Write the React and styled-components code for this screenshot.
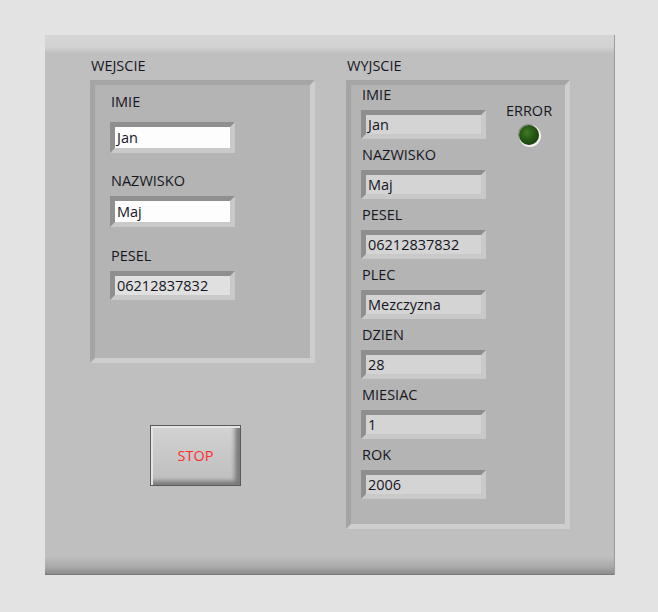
import React from 'react';
import styled, { createGlobalStyle } from 'styled-components';

const GlobalStyle = createGlobalStyle`
  body {
    margin: 0;
    background: #e3e3e3;
    font-family: "Open Sans", "Noto Sans", sans-serif;
  }
`;

const inputs = [
  { label: 'IMIE', value: 'Jan', kind: 'control', gapTop: 9, gapLabel: 12 },
  { label: 'NAZWISKO', value: 'Maj', kind: 'control', gapTop: 20, gapLabel: 7 },
  { label: 'PESEL', value: '06212837832', kind: 'grey', gapTop: 21, gapLabel: 7 },
];

const outputs = [
  { label: 'IMIE', value: 'Jan' },
  { label: 'NAZWISKO', value: 'Maj' },
  { label: 'PESEL', value: '06212837832' },
  { label: 'PLEC', value: 'Mezczyzna' },
  { label: 'DZIEN', value: '28' },
  { label: 'MIESIAC', value: '1' },
  { label: 'ROK', value: '2006' },
];

function App() {
  return (
    <>
      <GlobalStyle />
      <Panel>
        <TopBar />
        <Content>
          <Column $width={225}>
            <Caption>WEJSCIE</Caption>
            <Cluster $height={283}>
              <LeftFields>
                {inputs.map((f) => (
                  <FieldGroup key={f.label} style={{ marginTop: f.gapTop }}>
                    <Label>{f.label}</Label>
                    <Box $kind={f.kind} style={{ marginTop: f.gapLabel }}>
                      {f.value}
                    </Box>
                  </FieldGroup>
                ))}
              </LeftFields>
            </Cluster>
            <StopButton>STOP</StopButton>
          </Column>
          <Column $width={224}>
            <Caption>WYJSCIE</Caption>
            <Cluster $height={449}>
              <RightInner>
                <RightFields>
                  {outputs.map((f) => (
                    <OutGroup key={f.label}>
                      <Label>{f.label}</Label>
                      <Box $kind="indicator">{f.value}</Box>
                    </OutGroup>
                  ))}
                </RightFields>
                <ErrorIndicator>
                  <Label>ERROR</Label>
                  <Led />
                </ErrorIndicator>
              </RightInner>
            </Cluster>
          </Column>
        </Content>
        <BottomBar />
      </Panel>
    </>
  );
}

export default App;

const Panel = styled.div`
  margin: 35px 0 0 45px;
  width: 570px;
  height: 540px;
  display: flex;
  flex-direction: column;
  background: #bfbfbf;
  border-right: 1px solid #9c9c9c;
  box-sizing: border-box;
`;

const TopBar = styled.div`
  height: 18px;
  background: linear-gradient(#d5d5d5, #d3d3d3 65%, #c0c0c0);
`;

const BottomBar = styled.div`
  height: 18px;
  background: linear-gradient(#bdbdbd, #a9a9a9 55%, #8e8e8e 92%, #6f6f6f);
`;

const Content = styled.div`
  flex: 1;
  display: flex;
  gap: 31px;
  padding: 5px 0 0 45px;
`;

const Column = styled.div`
  width: ${(p) => p.$width}px;
  display: flex;
  flex-direction: column;
`;

const Caption = styled.div`
  height: 16px;
  line-height: 16px;
  font-size: 14.5px;
  color: #17171f;
  margin-left: 1px;
  margin-bottom: 6px;
`;

const Cluster = styled.div`
  height: ${(p) => p.$height}px;
  box-sizing: border-box;
  background: #b4b4b4;
  border-style: solid;
  border-width: 5px;
  border-color: #a5a5a5 #cecece #cecece #a5a5a5;
`;

const LeftFields = styled.div`
  padding-left: 15px;
  display: flex;
  flex-direction: column;
`;

const FieldGroup = styled.div`
  display: flex;
  flex-direction: column;
`;

const Label = styled.div`
  height: 16px;
  line-height: 16px;
  font-size: 14.5px;
  color: #17171f;
  margin-left: 1px;
  white-space: nowrap;
`;

const fills = {
  control: '#fdfdfd',
  grey: '#e0e0e0',
  indicator: '#d4d4d4',
};

const Box = styled.div`
  width: 125px;
  height: ${(p) => (p.$kind === 'control' ? 31 : 29)}px;
  box-sizing: border-box;
  border-style: solid;
  border-width: 5px;
  border-color: #8f8f8f #c9c9c9 #c9c9c9 #8f8f8f;
  background: ${(p) => fills[p.$kind]};
  padding-left: 2px;
  font-size: 14.5px;
  line-height: ${(p) => (p.$kind === 'control' ? 21 : 19)}px;
  color: #15151f;
`;

const RightInner = styled.div`
  display: flex;
  padding: 2px 0 0 10px;
`;

const RightFields = styled.div`
  display: flex;
  flex-direction: column;
`;

const OutGroup = styled.div`
  display: flex;
  flex-direction: column;
  gap: 7px;
  margin-bottom: 8px;
`;

const ErrorIndicator = styled.div`
  margin-left: 20px;
  padding-top: 16px;
  display: flex;
  flex-direction: column;
  align-items: center;
  width: 45px;
`;

const Led = styled.div`
  margin-top: 6px;
  width: 20px;
  height: 20px;
  border-radius: 50%;
  background: radial-gradient(circle at 40% 38%, #3f7a26 0%, #245612 45%, #12330a 100%);
  box-shadow: 1px 1px 0 1px #f2f2f2, -1px -1px 0 0 #8a8a8a;
`;

const StopButton = styled.div`
  margin: 62px 0 0 60px;
  width: 91px;
  height: 61px;
  box-sizing: border-box;
  border: 1px solid #5a5a5a;
  background: linear-gradient(#d3d3d3, #bdbdbd);
  box-shadow: inset 2px 2px 0 #e4e4e4, inset -5px -4px 4px #7a7a7a;
  display: flex;
  align-items: center;
  justify-content: center;
  font-size: 14.5px;
  color: #ff2d2d;
`;
